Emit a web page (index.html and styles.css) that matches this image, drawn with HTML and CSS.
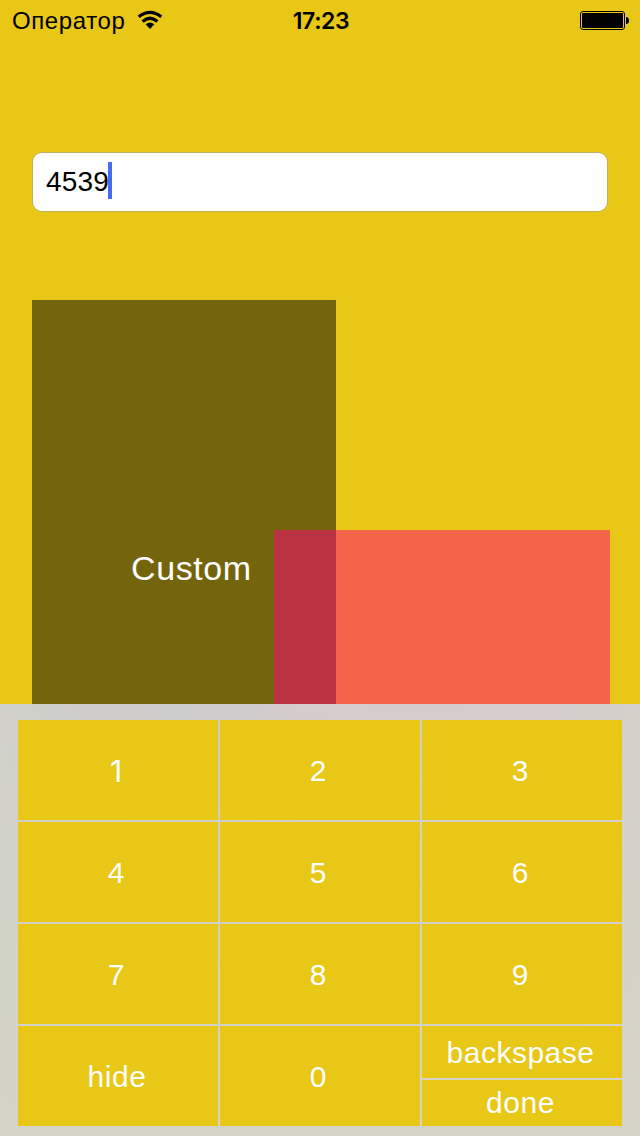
FILE: index.html
```html
<!DOCTYPE html>
<html lang="ru">
<head>
<meta charset="utf-8">
<title>Custom keyboard</title>
<link rel="stylesheet" href="styles.css">
</head>
<body>
<div class="screen">
  <header class="status">
    <div class="carrier">
      <span class="carrier-name">Оператор</span>
      <svg class="wifi" width="26" height="20" viewBox="0 0 26 20" aria-hidden="true">
        <path d="M1.7 6.8Q13 -2 24.3 6.8M5.6 11.4Q13 5.2 20.4 11.4" fill="none" stroke="#000" stroke-width="3.3"/>
        <path d="M8.6 14.2Q13 10.8 17.4 14.2L13 19Z"/>
      </svg>
    </div>
    <span class="time">17:23</span>
    <svg class="battery" width="50" height="20" viewBox="0 0 50 20" aria-hidden="true">
      <rect x=".5" y=".5" width="44" height="18" rx="2.5" fill="none" stroke="#000"/>
      <rect x="2" y="2" width="41" height="15" rx="1"/>
      <path d="M46 6Q49 6 49 9.5Q49 13 46 13Z"/>
    </svg>
  </header>
  <main class="content">
    <div class="field"><span class="value">4539</span><span class="caret"></span></div>
    <div class="panels">
      <div class="panel-dark"><span class="custom">Custom</span></div>
      <div class="panel-pink"></div>
    </div>
  </main>
  <div class="keyboard">
    <button class="key one">1</button>
    <button class="key">2</button>
    <button class="key">3</button>
    <button class="key">4</button>
    <button class="key">5</button>
    <button class="key">6</button>
    <button class="key">7</button>
    <button class="key">8</button>
    <button class="key">9</button>
    <button class="key word">hide</button>
    <button class="key">0</button>
    <div class="split">
      <button class="key backspace">backspase</button>
      <button class="key word done">done</button>
    </div>
  </div>
</div>
</body>
</html>
```

FILE: styles.css
```css
* { box-sizing: border-box; }
body { margin: 0; }

.screen {
  width: 640px;
  height: 1136px;
  display: flex;
  flex-direction: column;
  overflow: hidden;
  background: #e8c717;
  font-family: "Liberation Sans", Arial, sans-serif;
  color: #000;
}

.status {
  height: 40px;
  flex: none;
  display: grid;
  grid-template-columns: 1fr auto 1fr;
  align-items: center;
  padding: 0 10px 0 12px;
  line-height: 40px;
}
.carrier { display: flex; align-items: center; gap: 12px; }
.carrier-name { height: 40px; font-size: 24px; line-height: 42px; letter-spacing: 0.6px; }
.time { height: 40px; font-family: Inter, "Liberation Sans", sans-serif; font-size: 23px; line-height: 42px; font-weight: 600; letter-spacing: -0.4px; }
.battery { justify-self: end; margin-top: 2px; }

.content {
  height: 664px;
  flex: none;
  padding: 112px 30px 0 32px;
}
.field {
  width: 576px;
  height: 60px;
  display: flex;
  align-items: center;
  padding-left: 13px;
  border: 1px solid #bfb163;
  border-radius: 10px;
  background: #fff;
}
.value { font-size: 28px; letter-spacing: 0.2px; }
.caret { width: 4px; height: 37px; margin: 0 0 3px -1px; background: #446cf0; }

.panels {
  display: grid;
  grid-template-columns: 242px 62px 274px;
  grid-template-rows: 230px 174px;
  margin-top: 88px;
}
.panel-dark {
  grid-area: 1 / 1 / 3 / 3;
  padding: 248px 0 0 99px;
  background: #74640b;
}
.custom { display: block; font-size: 34px; line-height: 40px; letter-spacing: 0.6px; color: #fff; }
.panel-pink { grid-area: 2 / 2 / 3 / 4; background: rgba(255, 1, 125, 0.5); }

.keyboard {
  height: 432px;
  flex: none;
  display: grid;
  grid-template-columns: repeat(3, 200px);
  grid-template-rows: repeat(4, 100px);
  gap: 2px;
  padding: 16px 18px 10px;
  background:
    linear-gradient(to bottom, rgba(211, 212, 198, 0) 0, rgba(211, 212, 198, 0.3) 80px, rgba(211, 212, 198, 0.6) 200px, #d3d4c6 432px),
    linear-gradient(to right, #d1d1ca 0, #cecdcb 80px, #cdcbcc 220px, #d6cbcd 300px, #d5cccc 540px, #d5d0c9 640px);
}
.key {
  display: flex;
  align-items: center;
  justify-content: center;
  margin: 0;
  padding: 2px 4px 0 0;
  border: 0;
  border-radius: 0;
  background: #e8c717;
  color: #fff;
  font: 30px/34px "Liberation Sans", Arial, sans-serif;
}
.one { font-family: Inter, "Liberation Sans", sans-serif; }
.word { letter-spacing: 0.6px; padding-right: 2px; }
.backspace { letter-spacing: 0.5px; padding: 2px 3px 0 0; }
.done { padding: 0 3px 0 0; }
.split { display: grid; grid-template-rows: 52px 46px; gap: 2px; }
```
